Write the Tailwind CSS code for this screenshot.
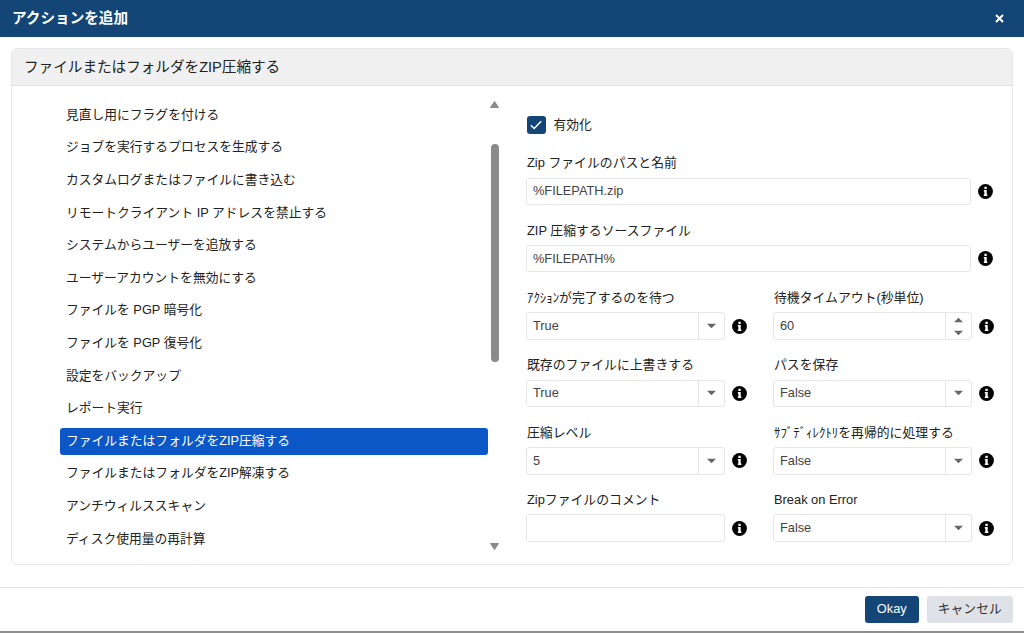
<!DOCTYPE html>
<html lang="ja">
<head>
    <meta charset="UTF-8">
    <meta name="viewport" content="width=device-width, initial-scale=1.0">
    <title>アクションを追加</title>
    <script src="https://cdn.jsdelivr.net/npm/@tailwindcss/browser@4"></script>
</head>
<body class="overflow-hidden bg-white font-['Liberation_Sans','Noto_Sans_CJK_JP',sans-serif] text-[12.78px] text-[#222]">
    <svg class="hidden">
        <symbol id="info" viewBox="0 0 16 16">
            <circle cx="8" cy="8" r="7.9" fill="#000"/>
            <path d="M6.8 3h2.5v2.2H6.8zM6.2 6.4h3.1v4.9h.7v1.6H6.2v-1.6h.6V8h-.6z" fill="#fff"/>
        </symbol>
        <symbol id="down" viewBox="0 0 10 6"><path d="M0 .5h10L5 5.5z" fill="currentColor"/></symbol>
        <symbol id="up" viewBox="0 0 10 6"><path d="M0 5.5h10L5 .5z" fill="currentColor"/></symbol>
    </svg>
    <div class="flex h-[633px] w-[1024px] flex-col border-b-2 border-[#8e8e8e]">
        <header class="flex h-[37px] shrink-0 items-center justify-between bg-[#134676] pr-[20px] pl-3 text-white">
            <h1 class="text-[14.6px] font-bold">アクションを追加</h1>
            <svg class="size-[9px]" viewBox="0 0 9 9"><path d="M1 1l7 7M8 1L1 8" stroke="#fff" stroke-width="2"/></svg>
        </header>

        <main class="mt-[11px] mr-[11px] ml-[11px] flex h-[517px] shrink-0 flex-col overflow-hidden rounded-md border border-[#e6e6e6]">
            <h2 class="flex h-[37px] shrink-0 items-center border-b border-[#e0e0e0] bg-[#f0f0f0] pt-px pl-3 text-[14.6px]">ファイルまたはフォルダをZIP圧縮する</h2>
            <div class="flex grow">
                <!-- action list -->
                <ul class="mt-[12px] ml-[47.5px] w-[428.5px] shrink-0 *:flex *:h-[32.62px] *:items-center *:pl-[6.5px]">
                    <li>見直し用にフラグを付ける</li>
                    <li>ジョブを実行するプロセスを生成する</li>
                    <li>カスタムログまたはファイルに書き込む</li>
                    <li>リモートクライアント IP アドレスを禁止する</li>
                    <li>システムからユーザーを追放する</li>
                    <li>ユーザーアカウントを無効にする</li>
                    <li>ファイルを PGP 暗号化</li>
                    <li>ファイルを PGP 復号化</li>
                    <li>設定をバックアップ</li>
                    <li>レポート実行</li>
                    <li class="!pl-0 pt-[2px]"><span class="flex h-[27px] w-full items-center rounded-[3px] bg-[#0b57c8] pb-[2px] pl-[6.5px] text-white">ファイルまたはフォルダをZIP圧縮する</span></li>
                    <li>ファイルまたはフォルダをZIP解凍する</li>
                    <li>アンチウィルススキャン</li>
                    <li>ディスク使用量の再計算</li>
                </ul>
                <!-- scrollbar -->
                <div class="mt-[15px] ml-[2px] flex h-[449px] w-[9px] shrink-0 flex-col items-center text-[#8a8a8a]">
                    <svg class="h-[7px] w-[9px]" viewBox="0 0 9 7"><path d="M4.5.5L8.5 6.5H.5z" fill="currentColor" stroke="currentColor" stroke-linejoin="round"/></svg>
                    <div class="mt-[36px] h-[218px] w-[8px] rounded-full bg-[#8a8a8a]"></div>
                    <svg class="mt-auto h-[7px] w-[9px]" viewBox="0 0 9 7"><path d="M.5.5h8l-4 6z" fill="currentColor" stroke="currentColor" stroke-linejoin="round"/></svg>
                </div>
                <!-- settings -->
                <form class="mt-[29px] ml-[27px] w-[470px]">
                    <label class="flex h-[20px] items-center gap-2 pl-px">
                        <span class="flex size-[18.5px] items-center justify-center rounded-[3px] bg-[#134676]">
                            <svg class="size-[12px]" viewBox="0 0 12 12" fill="none" stroke="#fff" stroke-width="1.5"><path d="M.8 6.2l3.4 3.3L11.2 2.3"/></svg>
                        </span>
                        有効化
                    </label>
                    <div class="mt-[14px] grid grid-cols-[221px_221px] gap-x-[26px] *:h-[67.4px]">
                        <div class="col-span-2">
                            <div class="flex h-[28.5px] items-center pb-px pl-px text-[12.85px]">Zip ファイルのパスと名前</div>
                            <div class="flex items-center gap-[7px]">
                                <div class="flex h-[27.5px] w-[445px] items-center rounded-[3px] border border-[#e6e6e6] pb-px pl-[6px] text-[#424242]">%FILEPATH.zip</div>
                                <svg class="size-[15px]"><use href="#info"/></svg>
                            </div>
                        </div>
                        <div class="col-span-2">
                            <div class="flex h-[28.5px] items-center pb-px pl-px text-[12.85px]">ZIP 圧縮するソースファイル</div>
                            <div class="flex items-center gap-[7px]">
                                <div class="flex h-[27.5px] w-[445px] items-center rounded-[3px] border border-[#e6e6e6] pb-px pl-[6px] text-[#424242]">%FILEPATH%</div>
                                <svg class="size-[15px]"><use href="#info"/></svg>
                            </div>
                        </div>
                        <div>
                            <div class="flex h-[28.5px] items-center pb-px pl-px text-[12.85px]">ｱｸｼｮﾝが完了するのを待つ</div>
                            <div class="flex items-center gap-[7px]">
                                <div class="flex h-[27.5px] w-[199px] rounded-[3px] border border-[#e6e6e6] text-[#424242]">
                                    <span class="flex grow items-center pb-px pl-[6px]">True</span>
                                    <span class="flex w-[26px] items-center justify-center border-l border-[#e6e6e6] text-[#666]"><svg class="h-[6px] w-[9px]"><use href="#down"/></svg></span>
                                </div>
                                <svg class="size-[15px]"><use href="#info"/></svg>
                            </div>
                        </div>
                        <div>
                            <div class="flex h-[28.5px] items-center pb-px pl-px text-[12.85px]">待機タイムアウト(秒単位)</div>
                            <div class="flex items-center gap-[7px]">
                                <div class="flex h-[27.5px] w-[199px] rounded-[3px] border border-[#e6e6e6] text-[#424242]">
                                    <span class="flex grow items-center pb-px pl-[6px]">60</span>
                                    <span class="flex w-[26px] flex-col items-center justify-center gap-[7px] border-l border-[#e6e6e6] text-[#666]">
                                        <svg class="h-[6px] w-[9px]"><use href="#up"/></svg>
                                        <svg class="h-[6px] w-[9px]"><use href="#down"/></svg>
                                    </span>
                                </div>
                                <svg class="size-[15px]"><use href="#info"/></svg>
                            </div>
                        </div>
                        <div>
                            <div class="flex h-[28.5px] items-center pb-px pl-px text-[12.85px]">既存のファイルに上書きする</div>
                            <div class="flex items-center gap-[7px]">
                                <div class="flex h-[27.5px] w-[199px] rounded-[3px] border border-[#e6e6e6] text-[#424242]">
                                    <span class="flex grow items-center pb-px pl-[6px]">True</span>
                                    <span class="flex w-[26px] items-center justify-center border-l border-[#e6e6e6] text-[#666]"><svg class="h-[6px] w-[9px]"><use href="#down"/></svg></span>
                                </div>
                                <svg class="size-[15px]"><use href="#info"/></svg>
                            </div>
                        </div>
                        <div>
                            <div class="flex h-[28.5px] items-center pb-px pl-px text-[12.85px]">パスを保存</div>
                            <div class="flex items-center gap-[7px]">
                                <div class="flex h-[27.5px] w-[199px] rounded-[3px] border border-[#e6e6e6] text-[#424242]">
                                    <span class="flex grow items-center pb-px pl-[6px]">False</span>
                                    <span class="flex w-[26px] items-center justify-center border-l border-[#e6e6e6] text-[#666]"><svg class="h-[6px] w-[9px]"><use href="#down"/></svg></span>
                                </div>
                                <svg class="size-[15px]"><use href="#info"/></svg>
                            </div>
                        </div>
                        <div>
                            <div class="flex h-[28.5px] items-center pb-px pl-px text-[12.85px]">圧縮レベル</div>
                            <div class="flex items-center gap-[7px]">
                                <div class="flex h-[27.5px] w-[199px] rounded-[3px] border border-[#e6e6e6] text-[#424242]">
                                    <span class="flex grow items-center pb-px pl-[6px]">5</span>
                                    <span class="flex w-[26px] items-center justify-center border-l border-[#e6e6e6] text-[#666]"><svg class="h-[6px] w-[9px]"><use href="#down"/></svg></span>
                                </div>
                                <svg class="size-[15px]"><use href="#info"/></svg>
                            </div>
                        </div>
                        <div>
                            <div class="flex h-[28.5px] items-center pb-px pl-px text-[12.85px]">ｻﾌﾞﾃﾞｨﾚｸﾄﾘを再帰的に処理する</div>
                            <div class="flex items-center gap-[7px]">
                                <div class="flex h-[27.5px] w-[199px] rounded-[3px] border border-[#e6e6e6] text-[#424242]">
                                    <span class="flex grow items-center pb-px pl-[6px]">False</span>
                                    <span class="flex w-[26px] items-center justify-center border-l border-[#e6e6e6] text-[#666]"><svg class="h-[6px] w-[9px]"><use href="#down"/></svg></span>
                                </div>
                                <svg class="size-[15px]"><use href="#info"/></svg>
                            </div>
                        </div>
                        <div>
                            <div class="flex h-[28.5px] items-center pb-px pl-px text-[12.85px]">Zipファイルのコメント</div>
                            <div class="flex items-center gap-[7px]">
                                <div class="h-[27.5px] w-[199px] rounded-[3px] border border-[#e6e6e6]"></div>
                                <svg class="size-[15px]"><use href="#info"/></svg>
                            </div>
                        </div>
                        <div>
                            <div class="flex h-[28.5px] items-center pb-px pl-px text-[12.85px]">Break on Error</div>
                            <div class="flex items-center gap-[7px]">
                                <div class="flex h-[27.5px] w-[199px] rounded-[3px] border border-[#e6e6e6] text-[#424242]">
                                    <span class="flex grow items-center pb-px pl-[6px]">False</span>
                                    <span class="flex w-[26px] items-center justify-center border-l border-[#e6e6e6] text-[#666]"><svg class="h-[6px] w-[9px]"><use href="#down"/></svg></span>
                                </div>
                                <svg class="size-[15px]"><use href="#info"/></svg>
                            </div>
                        </div>
                    </div>
                </form>
            </div>
        </main>

        <footer class="mt-auto flex h-[44px] shrink-0 justify-end gap-2 border-t border-[#e4e4e4] pt-[7.5px] pr-[11px]">
            <button class="h-[27.5px] w-[53.5px] rounded-[3px] bg-[#134676] pb-px text-white">Okay</button>
            <button class="h-[27.5px] w-[86.5px] rounded-[3px] bg-[#dee2e6] pb-px text-[#333]">キャンセル</button>
        </footer>
    </div>
</body>
</html>
